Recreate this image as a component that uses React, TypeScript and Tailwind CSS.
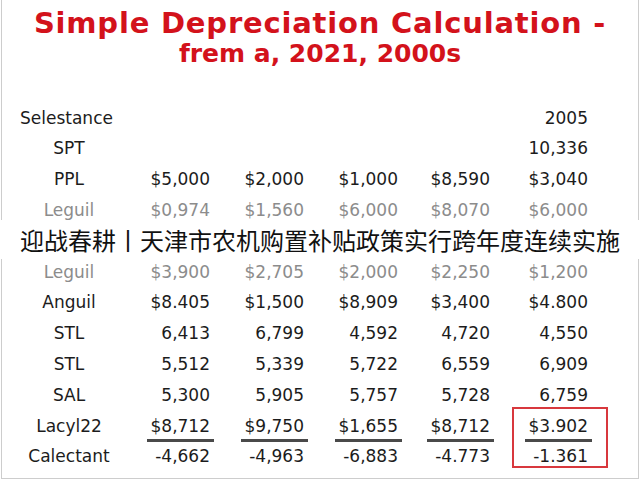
import React from "react";

type Row = { label: string; values: string[]; faded?: boolean; underline?: boolean };

const rows: Row[] = [
  { label: "SPT", values: ["", "", "", "", "10,336"] },
  { label: "PPL", values: ["$5,000", "$2,000", "$1,000", "$8,590", "$3,040"] },
  { label: "Leguil", values: ["$0,974", "$1,560", "$6,000", "$8,070", "$6,000"], faded: true },
  { label: "", values: ["", "", "", "", ""] },
  { label: "Leguil", values: ["$3,900", "$2,705", "$2,000", "$2,250", "$1,200"], faded: true },
  { label: "Anguil", values: ["$8.405", "$1,500", "$8,909", "$3,400", "$4.800"] },
  { label: "STL", values: ["6,413", "6,799", "4,592", "4,720", "4,550"] },
  { label: "STL", values: ["5,512", "5,339", "5,722", "6,559", "6,909"] },
  { label: "SAL", values: ["5,300", "5,905", "5,757", "5,728", "6,759"] },
  { label: "Lacyl22", values: ["$8,712", "$9,750", "$1,655", "$8,712", "$3.902"], underline: true },
  { label: "Calectant", values: ["-4,662", "-4,963", "-6,883", "-4.773", "-1.361"] },
];

const grid = "grid grid-cols-[98px_92px_94px_94px_92px_98px] h-[30.8px] items-center";

export default function App() {
  return (
    <div className="relative w-[640px] h-[480px] overflow-hidden bg-white">
      <div className="mx-px h-[479px] border-x border-b border-[#cdcdcd]">
        {/* Title */}
        <div className="pt-[8px] text-center font-bold text-[#d3121b] font-['DejaVu_Sans',sans-serif]">
          <div className="text-[29px] leading-[31px] tracking-[0.8px]">Simple Depreciation Calculation -</div>
          <div className="text-[25px] leading-[30px]">frem a, 2021, 2000s</div>
        </div>

        {/* Table */}
        <div className="mt-[34px] pl-[18px] text-[17px] text-[#1c1c1c] font-['DejaVu_Sans',sans-serif]">
          <div className={grid}>
            <div>Selestance</div>
            <div />
            <div />
            <div />
            <div />
            <div className="text-right">2005</div>
          </div>
          {rows.map((r, i) => (
            <div key={i} className={`${grid} ${r.faded ? "text-[#8c8c8c]" : ""}`}>
              <div className="text-center">{r.label}</div>
              {r.values.map((v, j) => (
                <div key={j} className="flex justify-end">
                  {r.underline ? (
                    <span className="relative">
                      {v}
                      <span className="absolute -left-1 -right-1 top-full h-[2.5px] bg-[#4a4a4a]" />
                    </span>
                  ) : (
                    <span>{v}</span>
                  )}
                </div>
              ))}
            </div>
          ))}
        </div>
      </div>

      {/* highlight box */}
      <div className="absolute left-[512px] top-[407px] w-[96px] h-[61px] border-2 border-[#d8383d]" />

      {/* subtitle banner */}
      <div className="absolute left-0 right-0 top-[220px] h-[39px] bg-white flex items-center justify-center text-[24px] text-[#111] font-['Noto_Sans_CJK_SC',sans-serif]">
        迎战春耕丨天津市农机购置补贴政策实行跨年度连续实施
      </div>
    </div>
  );
}
